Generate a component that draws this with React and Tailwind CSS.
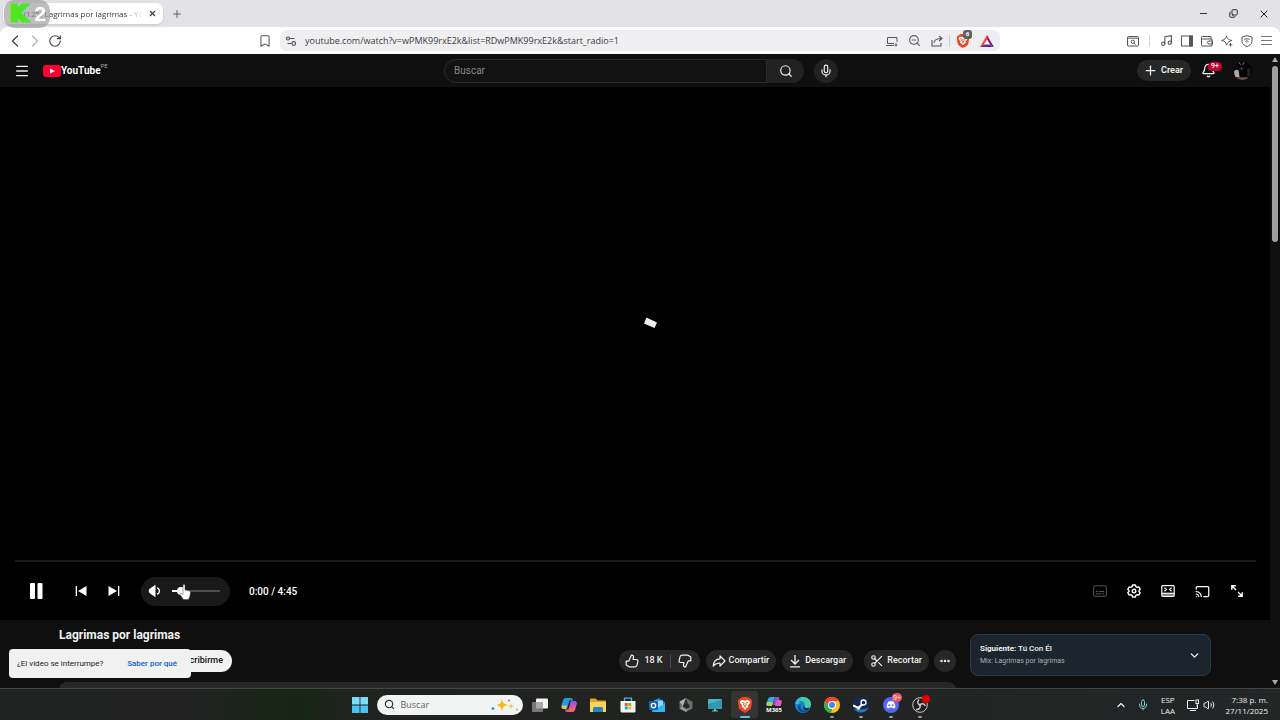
import {
  Bell,
  Bookmark,
  Cast,
  ChevronDown,
  ChevronLeft,
  ChevronRight,
  ChevronUp,
  Copy,
  Ellipsis,
  Menu,
  Mic,
  Minus,
  Music,
  Plus,
  RotateCw,
  Scissors,
  Search,
  Volume2,
  X,
  ZoomOut,
} from 'lucide-react';

export default function App() {
  return (
    <div className="flex h-screen flex-col overflow-hidden bg-[#e3e2e6] font-['Open_Sans','Noto_Sans',sans-serif]">
      <TabStrip />
      <Toolbar />
      <div className="flex min-h-0 flex-1 bg-[#0f0f0f] font-[Roboto,sans-serif] text-[#f1f1f1]">
        <main className="relative flex min-w-0 flex-1 flex-col">
          <SiteHeader />
          <Player />
          <VideoInfo />
          <InterruptToast />
        </main>
        <Scrollbar />
      </div>
      <Taskbar />
    </div>
  );
}

/* Browser chrome */

function TabStrip() {
  return (
    <div className="relative flex h-[27px] shrink-0 items-center pl-[3px] text-[#3b3b40]">
      <div className="flex h-[21px] w-[160px] items-center rounded-md bg-white pl-[21px] shadow-sm">
        <span className="w-[119px] text-[8px] whitespace-nowrap mask-r-from-85%">
          (125) Lagrimas por lagrimas - Yo
        </span>
        <button aria-label="Cerrar pestaña" className="ml-[5px]">
          <X size={9} strokeWidth={3} />
        </button>
      </div>
      <button aria-label="Nueva pestaña" className="ml-2">
        <Plus size={12} strokeWidth={1.5} />
      </button>
      <div className="ml-auto flex items-center gap-5 pr-[10px] text-[#222]">
        <button aria-label="Minimizar"><Minus size={11} strokeWidth={2} /></button>
        <button aria-label="Restaurar"><Copy size={9} strokeWidth={2.5} className="-scale-x-100 rotate-180" /></button>
        <button aria-label="Cerrar"><X size={12} strokeWidth={2} /></button>
      </div>

      {/* Recorder badge */}
      <div className="absolute top-0 left-1 z-10 flex h-7 w-[46px] items-center justify-between rounded-[10px] bg-[#999]/65 pr-1 pl-[6px]">
        <span className="font-['DejaVu_Sans',sans-serif] text-[22px] leading-7 font-black text-[#4be81f] [-webkit-text-stroke:3px_#4be81f]">K</span>
        <span className="font-['Liberation_Sans',sans-serif] text-[21px] leading-7 font-bold text-white">2</span>
      </div>
    </div>
  );
}

function Toolbar() {
  return (
    <div className="flex h-[27px] shrink-0 items-center rounded-t-lg bg-white pr-2 pl-[5px] text-[#55555a]">
      <div className="flex w-[253px] items-center text-[#44444a]">
        <button aria-label="Atrás"><ChevronLeft size={20} strokeWidth={1.5} /></button>
        <button aria-label="Adelante" className="text-[#b5b5ba]"><ChevronRight size={20} strokeWidth={1.5} /></button>
        <button aria-label="Recargar" className="ml-[3px]"><RotateCw size={14} strokeWidth={2} /></button>
      </div>
      <button aria-label="Marcador" className="mr-2">
        <Bookmark size={14} strokeWidth={1.75} />
      </button>
      <div className="flex h-[21px] flex-1 items-center rounded-md bg-[#efeff1]">
        <svg viewBox="0 0 12 12" className="ml-[5px] size-3" fill="none" stroke="currentColor" strokeWidth="1.2">
          <circle cx="3" cy="3.5" r="1.5" />
          <path d="M4.5 3.5h5M2.500 8.500h4" />
          <circle cx="8.800" cy="8.500" r="1.800" />
        </svg>
        <input
          aria-label="Dirección"
          defaultValue="youtube.com/watch?v=wPMK99rxE2k&list=RDwPMK99rxE2k&start_radio=1"
          className="ml-2 min-w-0 flex-1 bg-transparent text-[9px] text-[#3d3d42] outline-none"
        />
        <div className="flex items-center gap-[10px] pr-[6px]">
          <svg viewBox="0 0 12 12" className="size-3" fill="none" stroke="currentColor">
            <path d="M11 7V2.500H1.500v6H8M0 10.500h8M10 8v3M8.500 9.700l1.500 1.500 1.500-1.500" />
          </svg>
          <ZoomOut size={13} strokeWidth={2} />
          <svg viewBox="0 0 12 12" className="size-3" fill="none" stroke="currentColor" strokeWidth="1.1">
            <path d="M1 5v6h9V8M3 8c0-3 3-4.500 7.500-4.500M8 1l3 2.500L8 6" />
          </svg>
          <span className="-ml-1 h-3 w-px bg-[#ccccd2]" />
          <div className="relative -ml-1">
            <BraveLion className="size-[14px]" />
            <span className="absolute -top-1 left-[7px] flex size-[9px] items-center justify-center rounded-[3px] bg-[#5c5f66] text-[6px] font-bold text-white">
              6
            </span>
          </div>
          <svg viewBox="0 0 14 12" className="h-3 w-[14px]">
            <path d="M7 0 0 12l7-4z" fill="#ff4724" />
            <path d="m7 0 7 12-7-4z" fill="#8b1f83" />
            <path d="M0 12h14L7 8z" fill="#5b2aa0" />
            <path d="M7 4.500 4 9.500h6z" fill="#fff" />
          </svg>
        </div>
      </div>
      <div className="ml-[127px] flex items-center gap-2">
        <svg viewBox="0 0 12 12" className="size-3" fill="none" stroke="currentColor">
          <rect x=".5" y="1.500" width="11" height="9.500" rx="1" />
          <path d="M.5 3.200h11M7 8l1.500 1.500" />
          <circle cx="5.800" cy="6.800" r="1.600" />
        </svg>
        <span className="mx-[2px] h-3 w-px bg-[#d5d5da]" />
        <Music size={13} strokeWidth={2} />
        <svg viewBox="0 0 12 12" className="size-3" fill="none" stroke="currentColor">
          <rect x=".5" y="1" width="11" height="10" />
          <path d="M8.500 1h3v10h-3z" fill="currentColor" />
        </svg>
        <svg viewBox="0 0 12 12" className="size-3" fill="none" stroke="currentColor">
          <path d="M10 4V1.500H1.500a1 1 0 0 0 0 2.500H11v7H1.500a1 1 0 0 1-1-1V2.500" />
          <path d="M11.500 6H8a1.500 1.500 0 0 0 0 3h3.500z" />
        </svg>
        <svg viewBox="0 0 12 12" className="size-3" fill="none" stroke="currentColor">
          <path d="M5.500.8C6 3.500 7 4.500 10.800 5.500 8.500 6.200 7 7 6.500 8.500L5.500 10C4.800 7 4 6.300.6 5.500 4 4.500 5 3.500 5.500.8z" />
          <path d="M9.500 8v3.500M7.800 9.800h3.500" />
        </svg>
        <svg viewBox="0 0 12 12" className="size-3" fill="none" stroke="currentColor">
          <path d="M6 .6 11 2v4.500c0 2.500-2.500 4-5 5-2.500-1-5-2.500-5-5V2z" />
          <path d="M3.200 4.800c1.800-1.400 3.800-1.400 5.600 0M4.500 6.500c1-.8 2-.8 3 0M6 7.500v.8" />
        </svg>
        <button aria-label="Menú" className="flex w-[11px] flex-col gap-[3px]">
          <span className="h-px w-full bg-[#77777c]" />
          <span className="h-px w-full bg-[#77777c]" />
          <span className="h-px w-full bg-[#77777c]" />
        </button>
      </div>
    </div>
  );
}

function BraveLion({ className }) {
  return (
    <svg viewBox="0 0 16 18" className={className}>
      <path d="M4.500 0h7l2 2 1.500.2 1 3-1 7c-.5 2-4 4.500-7 5.800C5 16.700 1.500 14.200 1 12.200l-1-7 1-3L2.500 2z" fill="#f1451e" />
      <path d="m3 4 2.500-.5L8 4.200l2.500-.7L13 4l.8 2.500-2.600 3.200.6 1.600-2 1.200L8 14.500l-1.800-2-2-1.200.6-1.600L2.200 6.500z" fill="#fff" />
      <path d="m4.500 6 2.500.7-.5 2.300L8 10l1.500-1L9 6.700l2.500-.7M6.500 11.500 8 10.800l1.500.7" fill="none" stroke="#f1451e" />
    </svg>
  );
}

/* Video page */

function SiteHeader() {
  return (
    <header className="grid h-[33px] shrink-0 grid-cols-[1fr_auto_1fr] items-center pr-[2px] pl-[14px]">
      <div className="flex items-center">
        <button aria-label="Guía"><Menu size={16} strokeWidth={2} /></button>
        <a href="#inicio" className="ml-[13px] flex items-center">
          <svg viewBox="0 0 18 12" className="h-3 w-[18px]">
            <rect width="18" height="12" rx="3" fill="#f03" />
            <path d="m7 3.500 5 2.500-5 2.500z" fill="#fff" />
          </svg>
          <span className="text-[10px] leading-4 font-bold text-white">YouTube</span>
          <span className="mb-[10px] text-[6px] leading-2 text-[#aaa]">PE</span>
        </a>
      </div>
      <div className="flex items-center">
        <form className="flex h-6 w-[360px]" onSubmit={(e) => e.preventDefault()}>
          <input
            aria-label="Buscar"
            placeholder="Buscar"
            className="min-w-0 flex-1 rounded-l-full border border-[#2b2b2b] bg-[#121212] pl-[9px] text-[10px] outline-none placeholder:text-[#888]"
          />
          <button aria-label="Buscar" className="flex w-[37px] items-center justify-center rounded-r-full bg-[#222]">
            <Search size={14} strokeWidth={2} />
          </button>
        </form>
        <button aria-label="Buscar con la voz" className="ml-[10px] flex size-6 items-center justify-center rounded-full bg-[#222]">
          <Mic size={14} strokeWidth={2} />
        </button>
      </div>
      <div className="flex items-center justify-end pr-4">
        <button className="flex h-[21px] items-center gap-[3px] rounded-full bg-[#272727] pr-2 pl-[6px] text-[9px] font-semibold">
          <Plus size={15} strokeWidth={2} />
          Crear
        </button>
        <button aria-label="Notificaciones" className="relative ml-[10px]">
          <Bell size={15} strokeWidth={2} />
          <span className="absolute -top-px left-[7px] rounded-full bg-[#cc0033] px-[3px] text-[7px] leading-[9px] font-medium text-white">
            9+
          </span>
        </button>
        <button aria-label="Cuenta" className="ml-[17px]">
          <svg viewBox="0 0 20 20" className="size-[19px] rounded-full">
            <rect width="20" height="20" fill="#050505" />
            <path d="m6 1 2 3M12 1l-2 3" stroke="#777" />
            <path d="M1 11c2-3 5-2 5 0l1 6H2z" fill="#aaa" />
            <path d="M8 7h2v2H8z" fill="#555" />
            <path d="M4 17h12v3H4z" fill="#6a5048" />
            <path d="M15 8h3v8h-3z" fill="#202020" />
          </svg>
        </button>
      </div>
    </header>
  );
}

function Player() {
  return (
    <section aria-label="Reproductor" className="flex min-h-0 flex-1 flex-col bg-black">
      <div className="flex min-h-0 flex-1 items-center justify-center">
        <svg viewBox="0 0 80 80" className="mt-[58px] size-20">
          <path d="m51.500 4.500 10.500 5-2.500 5.500-10.500-4.500z" fill="#eee" />
        </svg>
      </div>
      <input
        type="range"
        aria-label="Progreso"
        defaultValue={0}
        className="mr-[14px] ml-[15px] h-[2px] appearance-none bg-[#1a1a1a] [&::-webkit-slider-thumb]:size-0 [&::-webkit-slider-thumb]:appearance-none"
      />
      <div className="flex h-[58px] shrink-0 items-center pr-[26px] pl-[29px] text-white">
        <button aria-label="Pausa">
          <svg viewBox="0 0 14 18" className="h-[18px] w-[14px]" fill="currentColor">
            <rect x="1" y="1" width="5" height="16" rx="1" />
            <rect x="8.500" y="1" width="5" height="16" rx="1" />
          </svg>
        </button>
        <button aria-label="Anterior" className="ml-8">
          <SkipIcon className="h-3 w-3" />
        </button>
        <button aria-label="Siguiente" className="ml-[21px]">
          <SkipIcon className="h-3 w-3 rotate-180" />
        </button>
        <div className="relative ml-[21px] flex h-[29px] w-[89px] items-center rounded-full bg-[#191919] pl-[7px]">
          <button aria-label="Silenciar">
            <svg viewBox="0 0 14 14" className="size-[14px]">
              <path d="M7.500.8v12.400L2 9.500C.3 8.500.3 5.500 2 4.500z" fill="currentColor" />
              <path d="M9 3.800c3.200 1 3.200 5.400 0 6.400" fill="none" stroke="currentColor" strokeWidth="1.300" />
            </svg>
          </button>
          <input
            type="range"
            aria-label="Volumen"
            defaultValue={13}
            className="ml-[10px] h-[2px] w-12 appearance-none bg-linear-to-r from-white from-20% to-[#4d4d4d] to-20% [&::-webkit-slider-thumb]:size-2 [&::-webkit-slider-thumb]:appearance-none [&::-webkit-slider-thumb]:rounded-full [&::-webkit-slider-thumb]:bg-white"
          />
          <HandCursor className="absolute top-[7px] left-[38px] h-[16px] w-3" />
        </div>
        <span className="ml-[19px] text-[10px] font-medium">0:00 / 4:45</span>
        <div className="ml-auto flex items-center gap-5">
          <button aria-label="Subtítulos" className="text-[#555]">
            <svg viewBox="0 0 14 14" className="size-[14px]" fill="none" stroke="currentColor">
              <rect x=".7" y="1.800" width="12.600" height="10.500" rx="1" />
              <path d="M3 7.500h2M6 7.500h5M3 9.800h5M9 9.800h2" />
            </svg>
          </button>
          <button aria-label="Configuración">
            <svg viewBox="0 0 14 14" className="size-[14px]" fill="none" stroke="currentColor" strokeWidth="1.400">
              <path d="M5.600 1h2.800l.5 1.700 1.300.7 1.700-.4 1.300 2.300L12 6.500v1l1.200 1.200-1.300 2.300-1.700-.4-1.300.7-.5 1.700H5.600l-.5-1.700-1.300-.7-1.700.4L.8 8.700 2 7.500v-1L.8 5.300 2.100 3l1.700.4 1.300-.7z" strokeLinejoin="round" />
              <circle cx="7" cy="7" r="1.800" />
            </svg>
          </button>
          <button aria-label="Modo cine">
            <svg viewBox="0 0 14 14" className="size-[14px]" fill="none" stroke="currentColor" strokeWidth="1.200">
              <path d="M1.500 9.500h11v2.500h-11z" fill="#777" stroke="none" />
              <rect x=".8" y="1.700" width="12.400" height="10.600" rx="1" />
              <path d="M1 9.300h12" />
              <path d="m3.500 3.700 2 1.800-2 1.800M10.500 3.700l-2 1.800 2 1.800" />
            </svg>
          </button>
          <button aria-label="Transmitir"><Cast size={15} strokeWidth={2} /></button>
          <button aria-label="Pantalla completa">
            <svg viewBox="0 0 14 14" className="size-[14px]" fill="none" stroke="currentColor" strokeWidth="1.400">
              <path d="M1.800 5.800v-4h4M2 2l4 4M12.200 8.200v4h-4M12 12 8 8" />
            </svg>
          </button>
        </div>
      </div>
    </section>
  );
}

function SkipIcon({ className }) {
  return (
    <svg viewBox="0 0 12 12" className={className} fill="currentColor">
      <path d="M.7 1h1.300v10H.7zM11.500 1v10L3 6z" />
    </svg>
  );
}

function HandCursor({ className }) {
  return (
    <svg viewBox="0 0 12 16" className={className}>
      <path
        d="M4 1.500c0-1.500 2-1.500 2 0V6l4 .8c1 .3 1.500 1 1.400 2L11 12l-1.500 3.500h-5L1 10.500c-.6-1 .5-1.800 1.300-1.200L4 10.500z"
        fill="#fff"
        stroke="#444"
        strokeWidth=".5"
      />
    </svg>
  );
}

function VideoInfo() {
  return (
    <section className="flex h-[68px] shrink-0 gap-[14px] overflow-hidden px-[59px]">
      <div className="min-w-0 flex-1 pt-[7px]">
        <h1 className="text-[12px] leading-4 font-bold">Lagrimas por lagrimas</h1>
        <div className="mt-[7px] flex h-[22px] items-stretch text-[9px] font-medium">
          <button className="ml-[103px] w-[70px] rounded-full bg-[#f1f1f1] pr-[9px] text-right text-[#0f0f0f]">
            Suscribirme
          </button>
          <div className="ml-auto flex rounded-full bg-[#272727]">
            <button className="flex items-center gap-[5px] pr-[7px] pl-[6px]">
              <ThumbIcon className="size-[14px]" />
              18 K
            </button>
            <span className="my-1 w-px bg-[#4a4a4a]" />
            <button aria-label="No me gusta" className="pr-2 pl-[7px]">
              <ThumbIcon className="size-[14px] rotate-180" />
            </button>
          </div>
          <button className="ml-[6px] flex items-center gap-[3px] rounded-full bg-[#272727] pr-[7px] pl-[6px]">
            <svg viewBox="0 0 14 14" className="size-[14px]" fill="none" stroke="currentColor" strokeWidth="1.200" strokeLinejoin="round">
              <path d="M8 1.800 13 7l-5 5V9C5 9 3 10 1.200 12 1.500 8 4 5 8 4.800z" />
            </svg>
            Compartir
          </button>
          <button className="ml-[6px] flex items-center gap-[3px] rounded-full bg-[#272727] pr-[7px] pl-[6px]">
            <svg viewBox="0 0 14 14" className="size-[14px]" fill="none" stroke="currentColor" strokeWidth="1.300">
              <path d="M7 1v8.500M3 6l4 4 4-4M2 12.800h10" />
            </svg>
            Descargar
          </button>
          <button className="ml-[11px] flex items-center gap-[3px] rounded-full bg-[#272727] pr-[7px] pl-[6px]">
            <Scissors size={14} strokeWidth={2} />
            Recortar
          </button>
          <button aria-label="Más acciones" className="ml-[5px] flex w-[22px] items-center justify-center rounded-full bg-[#272727]">
            <Ellipsis size={12} strokeWidth={3} />
          </button>
        </div>
        <div className="mt-[10px] h-10 rounded-lg bg-[#272727]" />
      </div>
      <button className="mt-[14px] flex h-[42px] w-[241px] items-center justify-between rounded-lg border border-[#303a40] bg-[#1b252d] px-[9px] text-left">
        <span className="flex flex-col">
          <span className="text-[8px] leading-[13px] font-medium">
            <b className="font-bold">Siguiente:</b> Tú Con Él
          </span>
          <span className="text-[7px] leading-[13px] text-[#aab0b5]">Mix: Lagrimas por lagrimas</span>
        </span>
        <ChevronDown size={13} strokeWidth={2.500} />
      </button>
    </section>
  );
}

function ThumbIcon({ className }) {
  return (
    <svg viewBox="0 0 14 14" className={className} fill="none" stroke="currentColor" strokeWidth="1.200" strokeLinejoin="round">
      <path d="M1.200 7.200h2.500L6.500 1c1.500 0 2.300 1 2 2.300L8 5.500h3.500c1.200 0 1.700.8 1.400 1.800l-1 4c-.3 1-1 1.500-2 1.500H4L1.200 11z" />
    </svg>
  );
}

function InterruptToast() {
  return (
    <div className="absolute bottom-[10px] left-[9px] flex h-[29px] w-[182px] items-center justify-between rounded-[4px] bg-[#f1f1f1] pr-[14px] pl-2 text-[8px] whitespace-nowrap text-[#222]">
      <span>¿El vídeo se interrumpe?</span>
      <a href="#ayuda" className="font-medium text-[#065fd4]">Saber por qué</a>
    </div>
  );
}

function Scrollbar() {
  return (
    <div className="flex w-[10px] shrink-0 flex-col items-center py-[3px]">
      <svg viewBox="0 0 6 5" className="h-[5px] w-[6px] shrink-0"><path d="M3 0 6 5H0z" fill="#aaa" /></svg>
      <div className="mt-1 h-[28%] w-[6px] rounded-full bg-[#9f9f9f]" />
      <svg viewBox="0 0 6 5" className="mt-auto h-[5px] w-[6px] shrink-0"><path d="M3 5 0 0h6z" fill="#aaa" /></svg>
    </div>
  );
}

/* Taskbar */

const apps = [
  { name: 'Vista de tareas', Icon: TaskViewIcon },
  { name: 'Copilot', Icon: CopilotIcon },
  { name: 'Explorador', Icon: FolderIcon },
  { name: 'Store', Icon: StoreIcon },
  { name: 'Outlook', Icon: OutlookIcon },
  { name: 'Editor 3D', Icon: HexIcon },
  { name: 'Escritorio', Icon: MonitorIcon },
  { name: 'Brave', Icon: BraveLion, active: true },
  { name: 'Microsoft 365', Icon: M365Icon },
  { name: 'Edge', Icon: EdgeIcon },
  { name: 'Chrome', Icon: ChromeIcon, open: true },
  { name: 'Steam', Icon: SteamIcon, open: true },
  { name: 'Discord', Icon: DiscordIcon, open: true, badge: '9+' },
  { name: 'OBS', Icon: ObsIcon, open: true, recording: true },
];

function Taskbar() {
  return (
    <footer className="grid h-8 shrink-0 grid-cols-[1fr_auto_1fr] items-center border-t border-[#454745] bg-linear-to-r from-[#202121] via-[#20231f] to-[#232627] text-[#eee]">
      <span className="h-full bg-linear-to-r from-transparent from-60% via-[#142711] via-85% to-transparent" />
      <div className="flex items-center">
        <button aria-label="Inicio" className="flex w-[27px] justify-center">
          <svg viewBox="0 0 16 16" className="size-4" fill="#4cc2f1">
            <path d="M0 0h7.600v7.600H0zM8.400 0H16v7.600H8.400z" fill="#7bdcf8" />
            <path d="M0 8.400h7.600V16H0zM8.400 8.400H16V16H8.400z" />
          </svg>
        </button>
        <label className="ml-[3px] flex h-5 w-[146px] items-center rounded-full bg-[#f2f3f3] pr-[5px] pl-[7px] text-[#333]">
          <Search size={11} strokeWidth={2.500} />
          <input
            aria-label="Buscar en Windows"
            placeholder="Buscar"
            className="ml-[6px] min-w-0 flex-1 bg-transparent text-[9px] outline-none placeholder:text-[#666]"
          />
          <svg viewBox="0 0 28 14" className="h-[14px] w-7">
            <path d="M12 1c.8 4 2 5 5.500 6-3.500 1-4.700 2-5.500 6-.8-4-2-5-5.500-6C10 6 11.200 5 12 1z" fill="#f5b916" />
            <path d="M21 5c.4 2 1 2.600 3 3.200-2 .6-2.600 1.200-3 3-.4-1.800-1-2.400-3-3C20 7.600 20.600 7 21 5z" fill="#f3cb60" />
            <circle cx="3" cy="10.500" r="1.500" fill="#2aa1e8" />
            <circle cx="19" cy="2.500" r="1" fill="#9a7b2b" />
            <circle cx="27" cy="11.500" r=".9" fill="#d9a63c" />
          </svg>
        </label>
        <div className="ml-1 flex w-[407px] justify-between">
          {apps.map((app) => (
            <TaskbarApp key={app.name} {...app} />
          ))}
        </div>
      </div>
      <div className="flex items-center justify-end pr-3 text-right text-[8px] leading-[11px]">
        <ChevronUp size={12} strokeWidth={2.500} />
        <Mic size={12} strokeWidth={2} className="ml-[10px] text-[#7cc6cc]" />
        <span className="ml-3 text-center">ESP<br />LAA</span>
        <svg viewBox="0 0 12 12" className="ml-3 size-3" fill="none" stroke="currentColor">
          <path d="M7.500 1.500h-7v8h10V6M3 11.500h6" />
          <rect x="9" y="1" width="2.500" height="3.500" />
          <path d="M10.200 4.500V8" />
        </svg>
        <Volume2 size={12} strokeWidth={2} className="ml-1" />
        <span className="ml-2 w-[45px] whitespace-nowrap">
          <time className="block">7:38 p. m.</time>
          <time className="block">27/11/2025</time>
        </span>
      </div>
    </footer>
  );
}

function TaskbarApp({ name, Icon, active, open, badge, recording }) {
  return (
    <button
      aria-label={name}
      className={`relative flex h-[27px] w-[27px] items-center justify-center rounded-[3px] ${active ? 'bg-[#343534]' : ''}`}
    >
      <Icon className="size-4" />
      {active && <span className="absolute bottom-0 h-[2px] w-[10px] rounded-full bg-[#66bde0]" />}
      {open && <span className="absolute bottom-0 h-[2px] w-1 rounded-full bg-[#999]" />}
      {badge && (
        <span className="absolute top-[2px] right-[2px] rounded-full bg-[#ef5360] px-px text-[7px] leading-[9px] text-white">{badge}</span>
      )}
      {recording && <span className="absolute top-1 right-[3px] size-2 rounded-full bg-[#e00000]" />}
    </button>
  );
}

function TaskViewIcon({ className }) {
  return (
    <svg viewBox="0 0 16 16" className={className}>
      <rect x="4" y="1.500" width="12" height="10" rx="1" fill="#f3f3f3" />
      <rect x="0" y="5" width="11" height="10" rx="1" fill="#777" />
      <path d="M4 5h7v6.500H4z" fill="#a9a9a9" />
    </svg>
  );
}

function CopilotIcon({ className }) {
  return (
    <svg viewBox="0 0 16 16" className={className}>
      <path d="M5 1h5c1.500 0 1.800 1 2.200 2.500H8.500L6 12H2.500C0 12 0 9.500.8 7L2 3.500C2.600 1.700 3.500 1 5 1z" fill="#2098e6" />
      <path d="M1 8.500h5L5 12H2.500C.8 12 .5 10 1 8.500z" fill="#e9c83a" />
      <path d="M11 15H6c-1.500 0-1.800-1-2.200-2.500h3.700L10 4h3.500C16 4 16 6.500 15.200 9L14 12.500c-.6 1.800-1.500 2.500-3 2.500z" fill="#d557b4" />
      <path d="M8 11h6.500l-.5 1.500c-.6 1.800-1.500 2.500-3 2.500H6c1.200 0 1.600-2 2-4z" fill="#f0665e" />
      <path d="M10 4h3.500c2 0 2.200 1.500 1.900 3.500H9z" fill="#8d58e4" />
    </svg>
  );
}

function FolderIcon({ className }) {
  return (
    <svg viewBox="0 0 16 16" className={className}>
      <path d="M0 2.500C0 1.700.5 1.500 1 1.500h4.500L7.500 3.500H15c.7 0 1 .4 1 1V14c0 .6-.4 1-1 1H1c-.6 0-1-.4-1-1z" fill="#e3a51f" />
      <path d="M0 5h16v9c0 .6-.4 1-1 1H1c-.6 0-1-.4-1-1z" fill="#fbd25a" />
      <path d="M3 15v-3.500c0-.8.500-1.500 1.500-1.500h7c1 0 1.500.7 1.500 1.500V15z" fill="#2582c4" />
    </svg>
  );
}

function StoreIcon({ className }) {
  return (
    <svg viewBox="0 0 16 16" className={className}>
      <path d="M4.500 4V1.200h7V4" fill="none" stroke="#41b4e8" strokeWidth="1.300" />
      <path d="M.5 4h15v10c0 1-.6 1.500-1.500 1.500H2c-1 0-1.500-.6-1.500-1.500z" fill="#f1f3f4" />
      <path d="M4.800 6h2.900v2.900H4.800z" fill="#f25022" />
      <path d="M8.300 6h2.900v2.900H8.300z" fill="#7fba00" />
      <path d="M4.800 9.500h2.900v2.900H4.800z" fill="#00a4ef" />
      <path d="M8.300 9.500h2.900v2.900H8.300z" fill="#ffb900" />
    </svg>
  );
}

function OutlookIcon({ className }) {
  return (
    <svg viewBox="0 0 16 16" className={className}>
      <path d="m3 5 6.500-4L16 5v9c0 .7-.4 1-1 1H4c-.6 0-1-.4-1-1z" fill="#1682d4" />
      <path d="M5 3.500h9V9l-4.500 3L5 9z" fill="#8fdcf8" />
      <path d="m3 14 13-7.500V14c0 .7-.4 1-1 1H4z" fill="#32b6ef" />
      <rect y="4" width="9" height="9" rx="1.200" fill="#0f62b5" />
      <circle cx="4.500" cy="8.500" r="2.200" fill="none" stroke="#fff" strokeWidth="1.300" />
    </svg>
  );
}

function HexIcon({ className }) {
  return (
    <svg viewBox="0 0 16 16" className={className}>
      <path d="m8 1 6.500 3.700v6.800L8 15l-6.500-3.500V4.700z" fill="#6a6c6f" />
      <path d="M8 1 1.500 4.700 5 9z" fill="#b0b2b5" />
      <path d="M8 1 5 9l6 1z" fill="#303235" />
      <path d="M5 9 1.500 11.500 8 15l3-5z" fill="#97999c" />
      <path d="M6.500 7h4l1.500 3-3.500 2L5 10z" fill="#25272a" />
    </svg>
  );
}

function MonitorIcon({ className }) {
  return (
    <svg viewBox="0 0 16 16" className={className}>
      <rect x="1" y="2" width="14" height="10" rx=".7" fill="#45b6c9" />
      <path d="M1 7 15 2.500V12H1z" fill="#2f99b2" />
      <path d="M7 12h2v1.500h2v1H5v-1h2z" fill="#8bb6bf" />
    </svg>
  );
}

function M365Icon({ className }) {
  return (
    <svg viewBox="0 0 16 16" className={className}>
      <path d="M5 0h4L6 9H2C.2 9 0 7.500.6 6L2 2C2.500.8 3.500 0 5 0z" fill="#36a9e8" />
      <path d="M1 5h6L6 9H2C.3 9 .4 7 1 5z" fill="#a8d34b" />
      <path d="M9 0h3c1.500 0 1.500 1.500 1 3l-2 5H7z" fill="#8756e0" />
      <path d="M11 3h3c2 0 2 1.500 1.600 3l-1 3H9z" fill="#e45db4" />
      <text x="8" y="15" textAnchor="middle" fontSize="6" fontWeight="700" fill="#fff">M365</text>
    </svg>
  );
}

function EdgeIcon({ className }) {
  return (
    <svg viewBox="0 0 16 16" className={className}>
      <circle cx="8" cy="8" r="8" fill="#1784d1" />
      <path d="M.3 7C1 2.500 4.500 0 8 0c4.800 0 8 3.500 8 7 0 3-2.200 4-4 4-2 0-3-1-2.300-2.200C10.500 6 8 4 5.500 4 3 4 1 5.500.3 7z" fill="#43d0a0" />
      <path d="M.3 7C1 3.200 4 1 8 1.500 5 2.500 4 5 4.200 7z" fill="#30b8dc" />
      <path d="M5.500 7c-1 4 2 7.500 6.500 6.500l3-1.500c-2.500 4-7 4.500-10 2.500C1.500 12 2.500 8 5.500 7z" fill="#0b4fa0" />
      <path d="M9.500 8.500c-1 2 1.500 3.500 5 2.200l-1.500 2.500C9 14 6.500 10.500 9.500 8.500z" fill="#232627" />
    </svg>
  );
}

function ChromeIcon({ className }) {
  return (
    <svg viewBox="0 0 16 16" className={className}>
      <circle cx="8" cy="8" r="8" fill="#fbc116" />
      <path d="M1.100 4A8 8 0 0 1 14.900 4H8L4.500 10z" fill="#ea4335" />
      <path d="M1.100 4 4.600 10 8 12l-1 4A8 8 0 0 1 1.100 4z" fill="#34a853" />
      <circle cx="8" cy="8" r="4" fill="#fff" />
      <circle cx="8" cy="8" r="3" fill="#4285f4" />
    </svg>
  );
}

function SteamIcon({ className }) {
  return (
    <svg viewBox="0 0 16 16" className={className}>
      <circle cx="8" cy="8" r="8" fill="#142a56" />
      <path d="M1 11.500A8 8 0 0 0 15.500 10C12 13 6 13 1 11.500z" fill="#1b80bb" />
      <path d="m0 8.500 5.500 2.500 4-4" fill="none" stroke="#fff" strokeWidth="2" />
      <circle cx="10.500" cy="5.500" r="2.500" fill="#142a56" stroke="#fff" strokeWidth="1.300" />
      <circle cx="5.500" cy="11" r="1.800" fill="#fff" />
    </svg>
  );
}

function DiscordIcon({ className }) {
  return (
    <svg viewBox="0 0 16 16" className={className}>
      <circle cx="8" cy="8" r="8" fill="#5865f2" />
      <path d="M5.500 4.500c1.600-.5 3.400-.5 5 0 1.300 1.800 2 3.800 1.900 6-.8.600-1.500.9-2.400 1.100l-.6-1H6.600l-.6 1c-.9-.2-1.600-.5-2.400-1.100-.1-2.200.6-4.200 1.900-6z" fill="#fff" />
      <circle cx="6.300" cy="8.300" r="1" fill="#5865f2" />
      <circle cx="9.700" cy="8.300" r="1" fill="#5865f2" />
    </svg>
  );
}

function ObsIcon({ className }) {
  return (
    <svg viewBox="0 0 16 16" className={className} fill="none" stroke="#c9c9c9">
      <circle cx="8" cy="8" r="7.300" fill="#202020" />
      <path d="M7 2.500c-2 2-1.500 5 1 5.500M13.300 9c-1-2.500-4-3-5.300-1M4 12.500c2.700.5 5-1.500 4-4.500" strokeWidth="1.500" />
      <circle cx="8" cy="8" r="1" fill="#c9c9c9" />
    </svg>
  );
}
